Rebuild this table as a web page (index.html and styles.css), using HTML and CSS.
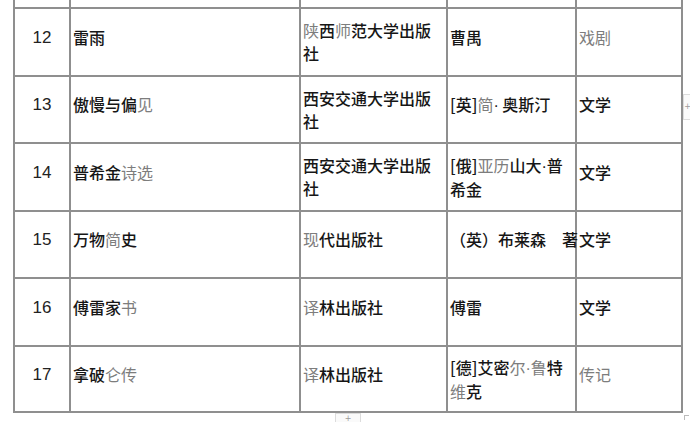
FILE: index.html
```html
<!DOCTYPE html>
<html lang="zh-CN">
<head>
<meta charset="utf-8">
<link rel="stylesheet" href="styles.css">
</head>
<body>
<div class="page">
  <table class="books">
    <colgroup>
      <col class="c-no"><col class="c-title"><col class="c-pub"><col class="c-author"><col class="c-cat">
    </colgroup>
    <tbody>
      <tr class="r-top"><td></td><td></td><td></td><td></td><td></td></tr>
      <tr class="r-a">
        <td class="no s">12</td>
        <td class="s">雷雨</td>
        <td><span class="g">陕</span>西<span class="g">师</span>范大学出版<br>社</td>
        <td class="s">曹禺</td>
        <td class="s"><span class="g">戏剧</span></td>
      </tr>
      <tr class="r-b">
        <td class="no s">13</td>
        <td class="s">傲慢与偏<span class="g">见</span></td>
        <td>西安交通大学出版<br>社</td>
        <td class="s nw">[英]<span class="g">简</span><span class="dot">·</span> 奥斯汀</td>
        <td class="s">文学</td>
      </tr>
      <tr class="r-a">
        <td class="no s">14</td>
        <td class="s">普希金<span class="g">诗选</span></td>
        <td>西安交通大学出版<br>社</td>
        <td class="nw">[俄]<span class="g">亚历</span>山大<span class="dot">·</span>普<br>希金</td>
        <td class="s">文学</td>
      </tr>
      <tr class="r-b">
        <td class="no s">15</td>
        <td class="s">万物<span class="g">简</span>史</td>
        <td class="s"><span class="g">现</span>代出版社</td>
        <td class="s nw">（英）布莱森　著</td>
        <td class="s">文学</td>
      </tr>
      <tr class="r-a">
        <td class="no s">16</td>
        <td class="s">傅雷家<span class="g">书</span></td>
        <td class="s"><span class="g">译</span>林出版社</td>
        <td class="s">傅雷</td>
        <td class="s">文学</td>
      </tr>
      <tr class="r-c">
        <td class="no s">17</td>
        <td class="s">拿破<span class="g">仑传</span></td>
        <td class="s"><span class="g">译</span>林出版社</td>
        <td class="nw">[德]艾密<span class="g">尔<span class="dot">·</span>鲁</span>特<br><span class="g">维</span>克</td>
        <td class="s"><span class="g">传记</span></td>
      </tr>
    </tbody>
  </table>
  <div class="handle handle-right">+</div>
  <div class="handle handle-bottom">+</div>
  <div class="corner"></div>
</div>
</body>
</html>
```

FILE: styles.css
```css
html, body {
  margin: 0;
  padding: 0;
  background: #ffffff;
}

.page {
  position: relative;
  width: 690px;
  height: 422px;
  overflow: hidden;
}

.books {
  margin-left: 13px;
  border-collapse: collapse;
  table-layout: fixed;
  width: 668px;
  font-family: "Noto Sans CJK SC", "Noto Sans", sans-serif;
  font-size: 16px;
  font-weight: 500;
  line-height: 23px;
  color: #161616;
}

.c-no { width: 56px; }
.c-title { width: 230px; }
.c-pub { width: 147px; }
.c-author { width: 129px; }
.c-cat { width: 106px; }

.books td {
  border: 2px solid #8f8f8f;
  padding: 0 2px 0 2px;
  vertical-align: middle;
  overflow: visible;
}

.books .r-top td {
  border-top: none;
  height: 7px;
  padding: 0;
}

.r-a { height: 68px; }
.r-b { height: 67px; }
.r-c { height: 66px; }

.books td.s {
  padding-bottom: 10px;
}

.books td.no {
  text-align: center;
  padding-left: 0;
  padding-right: 0;
  font-family: "Liberation Sans Narrow", "Liberation Sans", sans-serif;
  font-size: 17px;
  font-weight: 400;
  color: #222;
}

.nw {
  white-space: nowrap;
}

.dot {
  font-family: "Liberation Sans", sans-serif;
  font-weight: 400;
}

.g {
  color: #7d7d7d;
  font-weight: 400;
}

.handle {
  position: absolute;
  font-family: "DejaVu Sans", sans-serif;
  font-size: 8px;
  color: #9a9a9a;
  text-align: center;
  background: #fafafa;
  border: 1px solid #dcdcdc;
}

.handle-right {
  left: 683px;
  top: 94px;
  width: 7px;
  height: 24px;
  line-height: 24px;
  border-right: none;
}

.handle-bottom {
  left: 335px;
  top: 413px;
  width: 24px;
  height: 9px;
  line-height: 9px;
  border-bottom: none;
}

.corner {
  position: absolute;
  left: 684px;
  top: 415px;
  width: 4px;
  height: 4px;
  border-top: 1px solid #bbb;
  border-left: 1px solid #bbb;
}
```
